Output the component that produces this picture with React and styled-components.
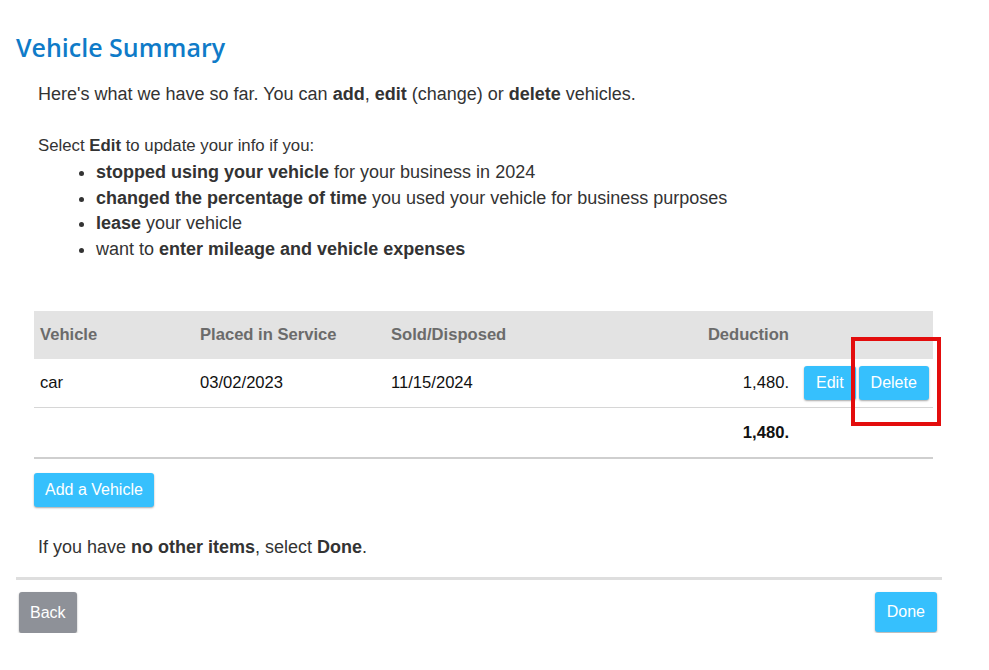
import React from 'react';
import styled, { createGlobalStyle } from 'styled-components';

const GlobalStyle = createGlobalStyle`
  body {
    margin: 0;
    background: #fff;
    font-family: "Liberation Sans", Arial, sans-serif;
    color: #333;
  }
`;

const Page = styled.div`
  width: 989px;
  padding: 30px 0 0 16px;
  box-sizing: border-box;
`;

const Title = styled.h1`
  margin: 0;
  font-family: "Open Sans", "Noto Sans", sans-serif;
  font-weight: 600;
  font-size: 25px;
  line-height: 34px;
  color: #0f7bc8;
`;

const Body = styled.div`
  padding-left: 22px;
`;

const Intro = styled.p`
  margin: 18px 0 0;
  font-size: 18px;
  line-height: 24px;
`;

const SelectNote = styled.p`
  margin: 29px 0 0;
  font-size: 16.8px;
  line-height: 22px;
`;

const Bullets = styled.ul`
  margin: 3px 0 0;
  padding-left: 58px;
  font-size: 18px;
  line-height: 25.5px;
`;

const TableWrap = styled.div`
  position: relative;
  width: 899px;
  margin: 49px 0 0 18px;
`;

const Table = styled.table`
  width: 899px;
  border-collapse: collapse;
  table-layout: fixed;
  font-size: 16.6px;
  color: #111;
`;

const Th = styled.th`
  background: #e3e3e3;
  color: #6b6b6b;
  font-weight: bold;
  text-align: ${p => (p.$right ? 'right' : 'left')};
  height: 48px;
  padding: 0 ${p => (p.$right ? '9px' : '6px')} 0 6px;
  white-space: nowrap;
`;

const Td = styled.td`
  height: ${p => p.$h || 48}px;
  padding: 0 ${p => (p.$right ? '9px' : '6px')} 0 6px;
  text-align: ${p => (p.$right ? 'right' : 'left')};
  font-weight: ${p => (p.$bold ? 'bold' : 'normal')};
  white-space: nowrap;
`;

const Tr = styled.tr`
  border-bottom: ${p => (p.$thick ? '2px solid #cfcfcf' : '1px solid #d6d6d6')};
`;

const Actions = styled.div`
  display: flex;
  gap: 3px;
`;

const Button = styled.button`
  font-family: "Liberation Sans", Arial, sans-serif;
  font-size: 16px;
  color: #fff;
  background: ${p => (p.$gray ? '#8e9198' : '#36c0fd')};
  border: none;
  border-radius: 3px;
  box-shadow: 0 1px 2px rgba(0, 0, 0, 0.35);
  height: ${p => p.$h || 34}px;
  padding: 0 ${p => p.$px || 11}px;
  cursor: pointer;
`;

const Callout = styled.div`
  position: absolute;
  left: 817px;
  top: 26px;
  width: 90px;
  height: 89px;
  box-sizing: border-box;
  border: 4px solid #e30d0d;
  pointer-events: none;
`;

const AddRow = styled.div`
  margin: 14px 0 0 18px;
`;

const Outro = styled.p`
  margin: 28px 0 0 22px;
  font-size: 18px;
  line-height: 24px;
`;

const Divider = styled.hr`
  width: 926px;
  margin: 18px 0 0;
  border: none;
  border-top: 3px solid #dedede;
`;

const Footer = styled.div`
  display: flex;
  justify-content: space-between;
  width: 918px;
  margin: 12px 0 0 3px;
`;

export default function App() {
  return (
    <>
      <GlobalStyle />
      <Page>
        <Title>Vehicle Summary</Title>
        <Body>
          <Intro>
            Here's what we have so far. You can <b>add</b>, <b>edit</b> (change) or <b>delete</b> vehicles.
          </Intro>
          <SelectNote>
            Select <b>Edit</b> to update your info if you:
          </SelectNote>
          <Bullets>
            <li><b>stopped using your vehicle</b> for your business in 2024</li>
            <li><b>changed the percentage of time</b> you used your vehicle for business purposes</li>
            <li><b>lease</b> your vehicle</li>
            <li>want to <b>enter mileage and vehicle expenses</b></li>
          </Bullets>
        </Body>
        <TableWrap>
          <Table>
            <colgroup>
              <col style={{ width: 160 }} />
              <col style={{ width: 191 }} />
              <col style={{ width: 215 }} />
              <col style={{ width: 198 }} />
              <col style={{ width: 135 }} />
            </colgroup>
            <thead>
              <tr>
                <Th>Vehicle</Th>
                <Th>Placed in Service</Th>
                <Th>Sold/Disposed</Th>
                <Th $right>Deduction</Th>
                <Th></Th>
              </tr>
            </thead>
            <tbody>
              <Tr>
                <Td>car</Td>
                <Td>03/02/2023</Td>
                <Td>11/15/2024</Td>
                <Td $right>1,480.</Td>
                <Td>
                  <Actions>
                    <Button $px={12}>Edit</Button>
                    <Button $px={12}>Delete</Button>
                  </Actions>
                </Td>
              </Tr>
              <Tr $thick>
                <Td $h={49}></Td>
                <Td $h={49}></Td>
                <Td $h={49}></Td>
                <Td $h={49} $right $bold>1,480.</Td>
                <Td $h={49}></Td>
              </Tr>
            </tbody>
          </Table>
          <Callout />
        </TableWrap>
        <AddRow>
          <Button>Add a Vehicle</Button>
        </AddRow>
        <Outro>
          If you have <b>no other items</b>, select <b>Done</b>.
        </Outro>
        <Divider />
        <Footer>
          <Button $gray $h={41}>Back</Button>
          <Button $h={40} $px={12}>Done</Button>
        </Footer>
      </Page>
    </>
  );
}
